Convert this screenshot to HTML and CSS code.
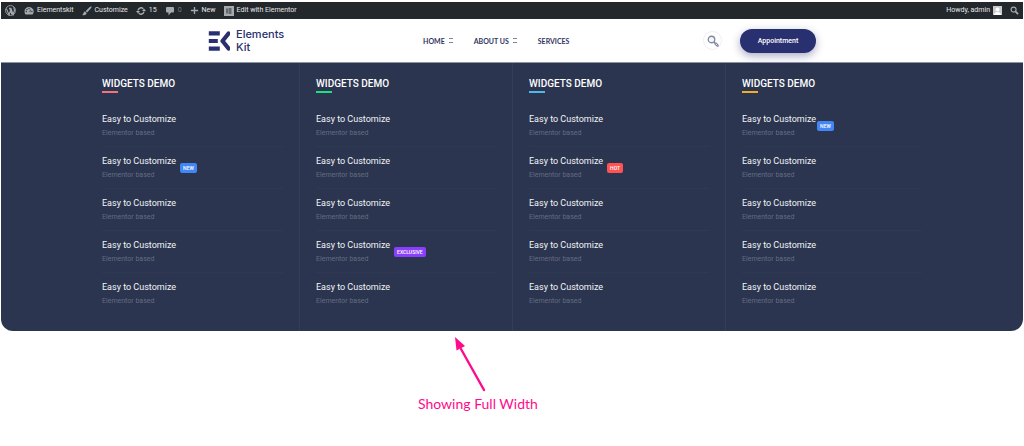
FILE: index.html
```
<!DOCTYPE html>
<html lang="en">
<head>
<meta charset="utf-8">
<title>ElementsKit Mega Menu</title>
<link rel="stylesheet" href="styles.css">
<script src="menu.js" defer></script>
</head>
<body>
<div class="page">
  <nav class="adminbar" aria-label="Admin">
    <a class="ab-item wp" href="#" aria-label="WordPress"><svg width="11" height="11" viewBox="0 0 20 20"><circle cx="10" cy="10" r="9" fill="none" stroke="currentColor" stroke-width="1.6"/><path d="M2.6 6.6 7.4 18 10 10.5 8.4 6M7.2 6h4M10.8 6l4 11.4L17 10c.8-3-1.3-3.500-.9-5.600M12.800 17.500 10 10" fill="none" stroke="currentColor" stroke-width="2"/></svg></a>
    <a class="ab-item site" href="#"><svg width="10" height="10" viewBox="0 0 20 20"><path d="M10 2a9 9 0 0 0-9 9c0 2.400.8 4.400 2 6h14a9 9 0 0 0-7-15z" fill="currentColor"/><path d="m9 13 5-7-2 8z" fill="#23282d"/><g fill="#23282d"><circle cx="4.500" cy="11" r="1.300"/><circle cx="6" cy="7" r="1.300"/><circle cx="10" cy="5" r="1.300"/><circle cx="15.800" cy="11" r="1.300"/></g><circle cx="10.500" cy="13.500" r="2.500" fill="currentColor"/></svg>Elementskit</a>
    <a class="ab-item customize" href="#"><svg width="10" height="10" viewBox="0 0 20 20"><path d="M19 1c-1-.8-3 .5-4 1.500L7.500 10l2.800 2.800L17.500 5C18.500 4 19.800 2 19 1zM6.300 11.200c-2 0-2.800 1.400-3.200 3C2.700 16 1.800 17 .5 18c3.500 1 8.500.2 8.600-4z" fill="currentColor"/></svg>Customize</a>
    <a class="ab-item updates" href="#"><svg width="10" height="10" viewBox="0 0 20 20"><g fill="none" stroke="currentColor" stroke-width="2.800"><path d="M4 9a6.200 6.200 0 0 1 10.500-3.500M16 11a6.200 6.200 0 0 1-10.500 3.500"/></g><path d="m12 10 8 0-4-5zM0 10h8L4 15z" fill="currentColor"/></svg>15</a>
    <a class="ab-item comments" href="#"><svg width="10" height="10" viewBox="0 0 20 20"><path d="M4 2h12a2 2 0 0 1 2 2v7a2 2 0 0 1-2 2h-4l-5 6v-6H4a2 2 0 0 1-2-2V4a2 2 0 0 1 2-2z" fill="currentColor"/></svg><span>0</span></a>
    <a class="ab-item new" href="#"><svg width="9" height="9" viewBox="0 0 20 20"><path d="M10 2v16M2 10h16" stroke="currentColor" stroke-width="3"/></svg>New</a>
    <a class="ab-item" href="#"><svg width="10" height="10" viewBox="0 0 20 20"><path d="M0 0h20v20H0z" fill="currentColor"/><path d="M6 5v10M9 6h6M9 10h6M9 14h6" stroke="#23282d" stroke-width="2"/></svg>Edit with Elementor</a>
    <a class="ab-item account" href="#">Howdy, admin<svg width="9" height="9" viewBox="0 0 18 18"><path d="M0 0h18v18H0z" fill="#c8cacd"/><circle cx="9" cy="7" r="4" fill="#fff"/><path d="M2 18c0-4 3-6 7-6s7 2 7 6z" fill="#fff"/></svg></a>
    <button class="ab-search" type="button" aria-label="Search"><svg width="9" height="9" viewBox="0 0 20 20"><circle cx="8" cy="8" r="5.500" fill="none" stroke="currentColor" stroke-width="2.500"/><path d="m12 12 6 6" stroke="currentColor" stroke-width="4"/></svg></button>
  </nav>

  <header class="header">
    <a class="logo" href="#">
      <svg width="22" height="20" viewBox="0 0 22 20"><g fill="none" stroke="#28306f" stroke-width="4.200" stroke-linejoin="round"><path d="M.8 2.300h11M.8 10H9.800M.8 17.700h11"/><path d="M20.500 2.500 14.500 10l6 7.500" stroke-linecap="round"/></g></svg>
      <span>Elements<br>Kit</span>
    </a>
    <nav class="nav" aria-label="Main">
      <a href="#">HOME <i class="glyph"></i></a>
      <a href="#">ABOUT US <i class="glyph"></i></a>
      <a href="#">SERVICES</a>
    </nav>
    <div class="actions">
      <button class="search" type="button" aria-label="Search"><svg width="12" height="12" viewBox="0 0 24 24"><circle cx="9" cy="9" r="6.500" fill="#f4f6fa" stroke="#8288a0" stroke-width="2.600"/><path d="m14 14 2 2" stroke="#8288a0" stroke-width="2"/><path d="m17 17 4 4" stroke="#8288a0" stroke-width="5" stroke-linecap="round"/><path d="m17.500 17.500 3 3" stroke="#fff" stroke-width="1.500"/></svg></button>
      <button class="appointment" type="button">Appointment</button>
    </div>
  </header>

  <main>
    <section class="mega"><div class="columns" id="columns"></div></section>
    <figure class="note">
      <svg width="32" height="56" viewBox="0 0 32 56"><path d="M29 53 6 12" stroke="#ff0a8b" stroke-width="2.400" stroke-linecap="round"/><path d="M0 0 1.500 13.500 10 9z" fill="#ff0a8b"/></svg>
      <figcaption>Showing Full Width</figcaption>
    </figure>
  </main>
</div>
</body>
</html>
```
FILE: styles.css
```
* { box-sizing: border-box; }
body { margin: 0; background: #fff; font-family: Roboto, "Open Sans", sans-serif; }
a { color: inherit; text-decoration: none; }
button { margin: 0; padding: 0; border: 0; background: none; color: inherit; font: inherit; }
svg { display: block; flex: none; }
.page { padding: 2px 1px 0; }

.adminbar { display: flex; align-items: center; height: 17px; padding: 0 4px; background: #23282d; color: #e6e7e8; font: 7px/17px Roboto, sans-serif; }
.ab-item { display: flex; align-items: center; gap: 3px; margin-right: 8px; white-space: nowrap; }
.ab-item svg, .ab-search { color: #a5aaaf; }
.comments span { color: #777c81; }
.account { margin-left: auto; }

.header { display: flex; align-items: center; max-width: 608px; height: 43px; margin: 0 auto; }
.logo { display: flex; align-items: center; gap: 6px; width: 76px; margin-right: 139px; color: #28306f; font: 500 11px/13px Inter, sans-serif; }
.nav { display: flex; gap: 21px; color: #30365f; font: 700 7px/12px Lato, sans-serif; white-space: nowrap; }
.nav a { display: flex; align-items: center; gap: 4px; }
.glyph { width: 4px; height: 5px; border: solid #7d819b; border-width: 1px 0; }
.actions { display: flex; align-items: center; gap: 18px; margin-left: auto; }
.search { display: grid; place-items: center; width: 19px; height: 19px; border: 1px solid #f0f0f4; border-radius: 50%; }
.appointment { width: 76px; height: 24px; border-radius: 12px; background: #28306f; color: #fff; font: 500 7px/24px Roboto, sans-serif; box-shadow: 0 3px 8px #28306f66; }

.mega { border-radius: 0 0 12px 12px; background: #2b3550; border-top: 1px solid #8d95a3; }
.columns { display: grid; grid-template-columns: repeat(4, 1fr); max-width: 852px; margin: 0 auto; }
.column { padding: 14px 16px 16px; }
.column + .column { border-left: 1px solid #343e59; }
.column h2 { margin: 0 0 12px; color: #fff; font-size: 10px; font-weight: 500; line-height: 14px; }
.column h2::after { content: ""; display: block; width: 16px; height: 2px; background: var(--accent); }
.red { --accent: #f4737a; }
.green { --accent: #1ee07f; }
.blue { --accent: #4cb9e8; }
.amber { --accent: #f3ab2d; }
.column ul { margin: 0; padding: 0; list-style: none; }
.column li { border-bottom: 1px solid #2f3954; }
.column li:last-child { border-bottom-color: transparent; }
.entry { display: flex; align-items: center; gap: 4px; padding: 7px 0 6px; color: #f3f4f6; font-size: 9px; line-height: 14px; }
.entry small { display: block; color: #646c80; font-size: 7px; line-height: 14px; }
.badge { padding: 0 3px; border-radius: 2px; color: #fff; font-size: 5px; font-weight: 500; line-height: 10px; }
.new-badge { background: #4285f4; }
.hot-badge { background: #ff5252; }
.exclusive-badge { background: #8a3ffc; }
.amber .entry { gap: 1px; }

.note { width: 124px; margin: 6px auto 0 417px; color: #ff0a8b; font: 14px/18px Lato, sans-serif; white-space: nowrap; }
.note svg { margin-left: 37px; }
.note figcaption { padding-top: 2px; }
```
FILE: menu.js
```
const columns = [
  { accent: "red", badges: { 1: "new" } },
  { accent: "green", badges: { 3: "exclusive" } },
  { accent: "blue", badges: { 1: "hot" } },
  { accent: "amber", badges: { 0: "new" } }
];

const entry = badge => `<li><a class="entry" href="#"><span>Easy to Customize<small>Elementor based</small></span>${
  badge ? `<span class="badge ${badge}-badge">${badge.toUpperCase()}</span>` : ""}</a></li>`;

document.getElementById("columns").innerHTML = columns.map(({ accent, badges }) =>
  `<div class="column ${accent}"><h2>WIDGETS DEMO</h2><ul>${
    [0, 1, 2, 3, 4].map(i => entry(badges[i])).join("")}</ul></div>`).join("");
```
